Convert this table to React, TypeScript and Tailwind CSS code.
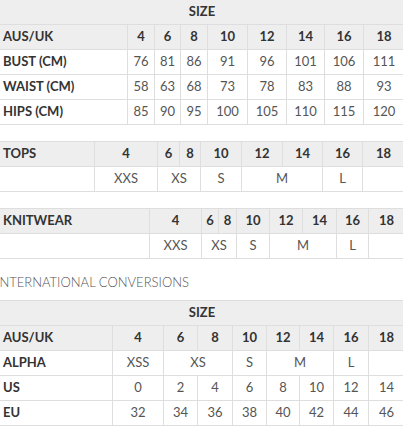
import React from "react";

const F = { fontFamily: "Lato, 'Open Sans', sans-serif" };

const th = "border border-[#dedede] bg-[#eeeeee] font-bold text-[#333] text-center h-[25px] p-0";
const td = "border border-[#dedede] bg-white text-[#555] text-center h-[25px] p-0";
const lab = "border border-[#dedede] bg-[#eeeeee] font-bold text-[#333] text-left pl-[3px] h-[25px] p-0";
const labW = "border border-[#dedede] bg-white font-bold text-[#333] text-left pl-[3px] h-[25px] p-0";

function Cols({ w }: { w: number[] }) {
  return (
    <colgroup>
      {w.map((x, i) => (
        <col key={i} style={{ width: x }} />
      ))}
    </colgroup>
  );
}

export default function App() {
  return (
    <div className="w-[403px] h-[426px] overflow-hidden bg-white text-[13px]" style={F}>
      <div className="ml-[-1px] w-[405px]">
        <table className="table-fixed border-collapse w-full">
          <Cols w={[128, 27, 26, 27, 40, 39, 38, 39, 41]} />
          <tbody>
            <tr>
              <td colSpan={9} className={th + " !h-[24px] !border-t-0"}>SIZE</td>
            </tr>
            <tr>
              <td className={lab}>AUS/UK</td>
              {["4", "6", "8", "10", "12", "14", "16", "18"].map((s) => (
                <td key={s} className={th}>{s}</td>
              ))}
            </tr>
            {[
              ["BUST (CM)", "76", "81", "86", "91", "96", "101", "106", "111"],
              ["WAIST (CM)", "58", "63", "68", "73", "78", "83", "88", "93"],
              ["HIPS (CM)", "85", "90", "95", "100", "105", "110", "115", "120"],
            ].map((r) => (
              <tr key={r[0]}>
                <td className={labW}>{r[0]}</td>
                {r.slice(1).map((v, i) => (
                  <td key={i} className={td}>{v}</td>
                ))}
              </tr>
            ))}
          </tbody>
        </table>

        <table className="table-fixed border-collapse w-full mt-[16px]">
          <Cols w={[95, 63, 22, 21, 41, 41, 40, 40, 42]} />
          <tbody>
            <tr>
              <td className={lab}>TOPS</td>
              {["4", "6", "8", "10", "12", "14", "16", "18"].map((s) => (
                <td key={s} className={th}>{s}</td>
              ))}
            </tr>
            <tr>
              <td className={td}></td>
              <td className={td}>XXS</td>
              <td colSpan={2} className={td}>XS</td>
              <td className={td}>S</td>
              <td colSpan={2} className={td}>M</td>
              <td className={td}>L</td>
              <td className={td}></td>
            </tr>
          </tbody>
        </table>

        <table className="table-fixed border-collapse w-full mt-[16px]">
          <Cols w={[150, 52, 17, 18, 33, 33, 34, 32, 36]} />
          <tbody>
            <tr>
              <td className={lab}>KNITWEAR</td>
              {["4", "6", "8", "10", "12", "14", "16", "18"].map((s) => (
                <td key={s} className={th}>{s}</td>
              ))}
            </tr>
            <tr>
              <td className={td}></td>
              <td className={td}>XXS</td>
              <td colSpan={2} className={td}>XS</td>
              <td className={td}>S</td>
              <td colSpan={2} className={td}>M</td>
              <td className={td}>L</td>
              <td className={td}></td>
            </tr>
          </tbody>
        </table>
      </div>

      <div className="overflow-hidden h-[41px] pt-[15px]">
        <div className="ml-[-4px] text-[13px] font-light text-[#555] leading-[16px] whitespace-nowrap">
          INTERNATIONAL CONVERSIONS
        </div>
      </div>

      <div className="ml-[-1px] w-[405px]">
        <table className="table-fixed border-collapse w-full">
          <Cols w={[113, 51, 34, 35, 34, 33, 34, 35, 36]} />
          <tbody>
            <tr>
              <td colSpan={9} className={th}>SIZE</td>
            </tr>
            <tr>
              <td className={lab}>AUS/UK</td>
              {["4", "6", "8", "10", "12", "14", "16", "18"].map((s) => (
                <td key={s} className={th}>{s}</td>
              ))}
            </tr>
            <tr>
              <td className={labW}>ALPHA</td>
              <td className={td}>XSS</td>
              <td colSpan={2} className={td}>XS</td>
              <td className={td}>S</td>
              <td colSpan={2} className={td}>M</td>
              <td className={td}>L</td>
              <td className={td}></td>
            </tr>
            {[
              ["US", "0", "2", "4", "6", "8", "10", "12", "14"],
              ["EU", "32", "34", "36", "38", "40", "42", "44", "46"],
            ].map((r) => (
              <tr key={r[0]}>
                <td className={labW}>{r[0]}</td>
                {r.slice(1).map((v, i) => (
                  <td key={i} className={td}>{v}</td>
                ))}
              </tr>
            ))}
          </tbody>
        </table>
      </div>
    </div>
  );
}
